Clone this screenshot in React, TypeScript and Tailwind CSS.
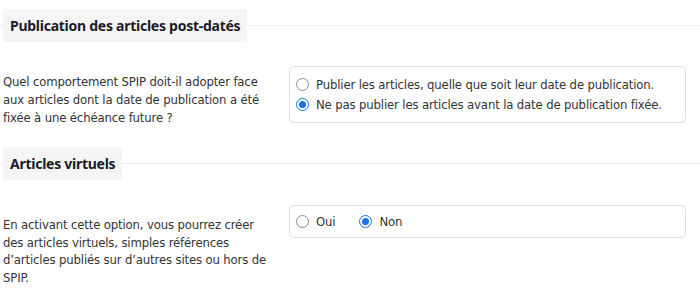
import React from "react";

function Radio({ checked, label }: { checked?: boolean; label: string }) {
  return (
    <label className="flex items-center gap-[7px]">
      {checked ? (
        <span className="w-[13px] h-[13px] rounded-full border-[1.5px] border-[#1a73e8] flex items-center justify-center">
          <span className="w-[7px] h-[7px] rounded-full bg-[#1a73e8]" />
        </span>
      ) : (
        <span className="w-[13px] h-[13px] rounded-full border-[1.5px] border-[#8a8a8a]" />
      )}
      <span>{label}</span>
    </label>
  );
}

function Heading({ title }: { title: string }) {
  return (
    <div className="flex items-center">
      <div className="w-[3px] h-px bg-[#eeeeee]" />
      <h3 className="bg-[#f5f5f5] h-[33px] px-[7px] flex items-center font-bold text-[14px] tracking-[-0.26px] text-[#1b1b29] font-['Noto_Sans',sans-serif]">
        {title}
      </h3>
      <div className="flex-1 h-px bg-[#eeeeee]" />
    </div>
  );
}

export default function App() {
  return (
    <div className="w-[700px] h-[297px] bg-white text-[#333] text-[13px] tracking-[-0.15px] font-['DejaVu_Sans_Condensed','DejaVu_Sans',sans-serif] overflow-hidden">
      <div className="pt-[9px]">
        <Heading title="Publication des articles post-datés" />
        <div className="flex mt-[24px]">
          <p className="w-[270px] ml-[3px] mt-[7px] leading-[18px]">
            Quel comportement SPIP doit-il adopter face aux articles dont la date de publication a été fixée à une échéance future ?
          </p>
          <div className="ml-[16px] w-[397px] h-[57px] border border-[#dddddd] rounded-[5px] px-[6px] flex flex-col justify-center gap-[2px] leading-[18px]">
            <Radio label="Publier les articles, quelle que soit leur date de publication." />
            <Radio checked label="Ne pas publier les articles avant la date de publication fixée." />
          </div>
        </div>
        <div className="mt-[20px]">
          <Heading title="Articles virtuels" />
        </div>
        <div className="flex mt-[25px]">
          <p className="w-[270px] ml-[3px] mt-[11px] leading-[17.5px]">
            En activant cette option, vous pourrez créer des articles virtuels, simples références d’articles publiés sur d’autres sites ou hors de SPIP.
          </p>
          <div className="ml-[16px] w-[397px] h-[33px] border border-[#dddddd] rounded-[5px] px-[6px] flex items-center gap-[24px]">
            <Radio label="Oui" />
            <Radio checked label="Non" />
          </div>
        </div>
      </div>
    </div>
  );
}
